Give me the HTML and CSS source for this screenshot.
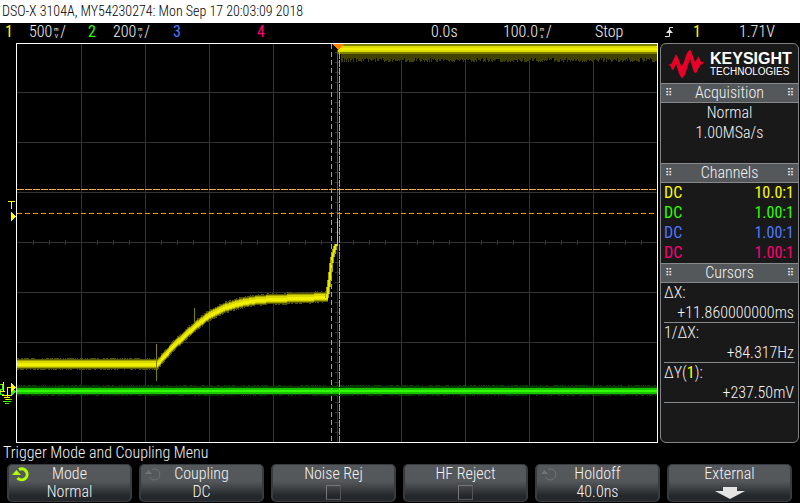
FILE: index.html
```html
<!DOCTYPE html>
<html lang="en">
<head>
<meta charset="utf-8">
<title>DSO-X 3104A</title>
<link rel="stylesheet" href="styles.css">
</head>
<body>
<header class="title">DSO-X 3104A, MY54230274: Mon Sep 17 20:03:09 2018</header>
<div class="status">
  <span class="ch1">1</span>
  <span class="scale">500<span class="unit"><span>m</span><span>V</span></span>/</span>
  <span class="ch2">2</span>
  <span class="scale">200<span class="unit"><span>m</span><span>V</span></span>/</span>
  <span class="ch3">3</span>
  <span class="ch4">4</span>
  <span>0.0s</span>
  <span class="scale">100.0<span class="unit"><span>m</span><span>s</span></span>/</span>
  <span>Stop</span>
  <svg class="edge" viewBox="0 0 9 12" aria-hidden="true"><path d="M0 10.5H4.500V1.500H8" fill="none" stroke="#e4e4e4"/><path d="M4.500 3L8 7H1z" fill="#e4e4e4"/></svg>
  <span class="ch1">1</span>
  <span>1.71V</span>
</div>
<main class="scope">
  <svg class="plot" viewBox="0 43 658 400" role="img" aria-label="Waveform display">
    <g id="grid" class="grid"></g>
    <g id="traces"></g>
    <g class="cursors">
      <path class="light" d="M17 189.500H657" stroke-dasharray="7 1"/>
      <path d="M17 213.500H657" stroke-dasharray="5 3"/>
      <path d="M331.500 44V442" stroke-dasharray="5 3"/>
      <path d="M339.500 52V442" stroke-dasharray="7 1"/>
    </g>
    <path class="trigger" d="M332 44H344L338 50z"/>
    <path class="frame" d="M16.500 43.500H657.500V442.500H16.500z"/>
    <g class="marks">
      <path class="y" d="M8 201.500H15M11.500 201V209"/>
      <path class="yf" d="M11 211L16 216.500L11 222z"/>
      <path class="g" d="M0 384.500H2.500V389.500H0.500V394.500H4M7.500 389V398M5 399.500H12M3 401.500H11M5 403.500H9"/>
      <path class="gf" d="M11 387L16 391.500L11 396z"/>
      <path class="y" d="M1 384.500H3.500M3.500 382V391M0 391.500H5M11 387.500H7.500V395M2 395.500H12M4 397.500H10M6 399.500H9"/>
      <path class="yf" d="M11 383L16 387.500L11 392z"/>
    </g>
  </svg>
  <aside class="side">
    <div class="logo">
      <svg viewBox="384 146 109 86" aria-hidden="true"><path fill="#e90029" d="M384 192L394 188L400 175L408 159L414 169L424 196L431 187L440 158L448 147H453L460 165L466 184L471 176L476 165L481 174L485 183L492 182V187L483 192L476 204L470 216H464L459 203L451 174L444 194L436 221L429 231H424L417 218L408 188L400 207H395L391 195z"/></svg>
      <div><b>KEYSIGHT</b><small>TECHNOLOGIES</small></div>
    </div>
    <h2><i>⠿</i>Acquisition<i>⠿</i></h2>
    <section class="acq"><p>Normal</p><p>1.00MSa/s</p></section>
    <h2><i>⠿</i>Channels<i>⠿</i></h2>
    <section class="channels">
      <p class="ch1"><span>DC</span><span>10.0:1</span></p>
      <p class="ch2"><span>DC</span><span>1.00:1</span></p>
      <p class="ch3"><span>DC</span><span>1.00:1</span></p>
      <p class="ch4"><span>DC</span><span>1.00:1</span></p>
    </section>
    <h2><i>⠿</i>Cursors<i>⠿</i></h2>
    <dl>
      <div><dt>ΔX:</dt><dd>+11.860000000ms</dd></div>
      <div><dt>1/ΔX:</dt><dd>+84.317Hz</dd></div>
      <div><dt>ΔY(<span class="ch1">1</span>):</dt><dd>+237.50mV</dd></div>
    </dl>
  </aside>
</main>
<div class="menu-title">Trigger Mode and Coupling Menu</div>
<nav class="menu">
  <button class="key" type="button"><svg class="knob active" viewBox="0 0 18 16"><path class="ring" d="M7 3.500A5.500 5.500 0 1 1 5.500 12"/><path class="head" d="M0 9L4.500 4L9 9z"/></svg><span>Mode</span><span>Normal</span></button>
  <button class="key" type="button"><svg class="knob" viewBox="0 0 18 16"><path class="ring" d="M8 3.500A5.500 5.500 0 1 1 5.500 11"/><path class="head" d="M1 8L4.500 4L8 8z"/></svg><span>Coupling</span><span>DC</span></button>
  <label class="key"><span>Noise Rej</span><input type="checkbox"></label>
  <label class="key"><span>HF Reject</span><input type="checkbox"></label>
  <button class="key" type="button"><svg class="knob" viewBox="0 0 18 16"><path class="ring" d="M8 3.500A5.500 5.500 0 1 1 5.500 11"/><path class="head" d="M1 8L4.500 4L8 8z"/></svg><span>Holdoff</span><span>40.0ns</span></button>
  <button class="key" type="button"><span>External</span><svg class="down" viewBox="0 0 30 12"><path d="M8 0H22V4H30L15 12L0 4H8z" fill="#e4e4e4"/></svg></button>
</nav>
<script src="plot.js"></script>
</body>
</html>
```
FILE: styles.css
```css
* { box-sizing: border-box; }
body {
  margin: 0;
  background: #000;
  color: #f4f4f4;
  font: 300 16px/20px "Roboto Condensed", Roboto, sans-serif;
}
h2, p, dl, dd { margin: 0; }
.title { height: 23px; padding: 0 2px; background: #fff; color: #000; font-size: 14px; line-height: 23px; white-space: nowrap; }
.ch1, .ch2, .ch3, .ch4 { font-weight: 400; }
.ch1 { color: #ffff00; }
.ch2 { color: #30ff00; }
.ch3 { color: #5078ff; }
.ch4 { color: #ff0078; }
.status {
  display: grid;
  grid-template-columns: 24fr 59fr 25fr 60fr 84fr 174fr 72fr 92fr 70fr 28fr 46fr 61fr;
  height: 20px;
  line-height: 18px;
  padding-left: 5px;
  white-space: nowrap;
}
.status > * { min-width: 0; }
.scale { display: flex; }
.unit {
  display: grid;
  grid-auto-rows: 7px;
  justify-items: center;
  width: 8px;
  padding-top: 2px;
  font-size: 6px;
  font-weight: 400;
  line-height: 7px;
}
.edge { width: 9px; height: 12px; margin-top: 3px; }
.scope { display: grid; grid-template-columns: minmax(0, 1fr) 140px; column-gap: 2px; }
.plot { display: block; width: 100%; shape-rendering: crispEdges; }
.plot path { fill: none; }
.grid path { stroke: #333; }
.frame { stroke: #fff; }
.cursors path { stroke: #ff9010; }
.cursors .light { stroke: #ffa838; }
.plot .trigger { fill: #ff8000; }
.marks .y { stroke: #ff0; }
.marks .g { stroke: #30ff00; }
.plot .marks .yf { fill: #ff0; }
.plot .marks .gf { fill: #30ff00; }
.side { margin-right: 1px; border: 1px solid #808486; border-radius: 6px; background: #191919; overflow: hidden; }
.logo { display: flex; align-items: center; gap: 6px; height: 39px; padding-left: 7px; color: #fff; font-family: "Liberation Sans", sans-serif; }
.logo svg { width: 36px; height: 28px; }
.logo b, .logo small { display: block; }
.logo b { font-size: 16px; font-weight: 700; line-height: 16px; }
.logo small { font-size: 10px; line-height: 9px; }
h2 {
  display: flex;
  justify-content: space-between;
  height: 20px;
  padding: 0 4px;
  border: solid #85898b;
  border-width: 1px 0;
  background: #54585a;
  font: inherit;
  line-height: 18px;
}
h2 i { font: 10px/18px "DejaVu Sans", sans-serif; }
.acq { height: 60px; text-align: center; }
.channels { height: 80px; padding: 0 4px 0 3px; }
.channels p { display: flex; justify-content: space-between; }
dl { padding: 0 3px; }
dl > div { height: 40px; border-bottom: 1px solid #85898b; }
dd { text-align: right; padding-right: 1px; }
.menu-title { padding-left: 3px; height: 21px; }
.menu { display: grid; grid-template-columns: repeat(6, minmax(0, 1fr)); gap: 7px; padding: 0 8px 0 7px; }
.key {
  position: relative;
  display: flex;
  flex-direction: column;
  align-items: center;
  height: 38px;
  padding: 0;
  border: solid #383c3e;
  border-width: 1px 2px;
  border-radius: 5px;
  background: linear-gradient(#54585a 45%, #24282a 85%);
  color: inherit;
  font: inherit;
  line-height: 18px;
}
.key input { appearance: none; width: 15px; height: 15px; margin: 2px 0 0; border: 1px solid #777; border-right-color: #555; border-bottom-color: #555; }
.knob { position: absolute; left: 3px; top: 1px; width: 18px; height: 16px; color: #707476; }
.knob .ring { fill: none; stroke: currentColor; stroke-width: 1; }
.knob .head { fill: currentColor; }
.knob.active { color: #b0ff00; }
.knob.active .ring { stroke-width: 3; }
.down { width: 30px; height: 12px; margin-top: 4px; }
```
FILE: plot.js
```js
const NS = "http://www.w3.org/2000/svg";
function draw(id, d, color, width = 1) {
  const p = document.createElementNS(NS, "path");
  p.setAttribute("d", d);
  p.style.stroke = color;
  p.style.strokeWidth = width;
  document.getElementById(id).append(p);
}

// Graticule: ten by eight divisions with subdivision ticks on both axes
let g = "";
for (let x = 81; x < 657; x += 64) g += `M${x}.5 44V442`;
for (let y = 92; y < 442; y += 50) g += `M17 ${y}.5H657`;
for (let x = 33; x < 657; x += 16) g += `M${x}.5 240V245`;
for (let y = 52; y < 442; y += 10) g += `M335 ${y}.5H340`;
draw("grid", g, "#333");

let seed = 7;
const rnd = n => (seed = (seed * 16807) % 2147483647) % n;

// Vertical slices of a band from y+a to y+b
function band(from, to, y, a, b, noise, color) {
  let d = "";
  for (let x = from; x < to; x++) {
    const c = Math.round(y(x));
    d += `M${x}.5 ${c + a - rnd(noise)}V${c + b + rnd(noise)}`;
  }
  draw("traces", d, color);
}

const pts = [[17, 364], [157, 364], [164, 356], [173, 346], [184, 336], [195, 326], [209, 315],
  [223, 308], [240, 303], [257, 300], [273, 299], [327, 297]];
function ch1(x) {
  let i = 1;
  while (i < pts.length - 1 && pts[i][0] < x) i++;
  const [a, b] = [pts[i - 1], pts[i]];
  return a[1] + (b[1] - a[1]) * (x - a[0]) / (b[0] - a[0]);
}
const flat = y => () => y;

band(17, 657, flat(391), -5, 4, 2, "#083c00");
band(17, 657, flat(391), -3, 3, 1, "#1cc400");
band(17, 657, flat(391), -1, 1, 1, "#30ff00");

band(17, 328, ch1, -5, 5, 2, "#555500");
band(17, 328, ch1, -4, 4, 1, "#a0a000");
band(17, 328, ch1, -3, 3, 1, "#d8d800");
band(17, 328, ch1, -1, 2, 1, "#f0f000");
draw("traces", "M156.500 344V381M194.500 308V324", "#808000");
draw("traces", "M327 298L330 277L332 259L336 244", "#a0a000", 4);
draw("traces", "M327 298L330 277L332 259L336 244", "#e8e800", 2);
draw("traces", "M337.500 50V218", "#666600");
draw("traces", "M337.500 218V246", "#d0d000");

band(341, 657, flat(50), 2, 8, 5, "#424200");
band(341, 657, flat(50), 2, 5, 8, "#424200");
band(338, 657, flat(50), -6, 4, 1, "#808000");
band(338, 657, flat(50), -4, 2, 1, "#dede00");
band(338, 657, flat(50), -2, 0, 1, "#f0f000");
```
